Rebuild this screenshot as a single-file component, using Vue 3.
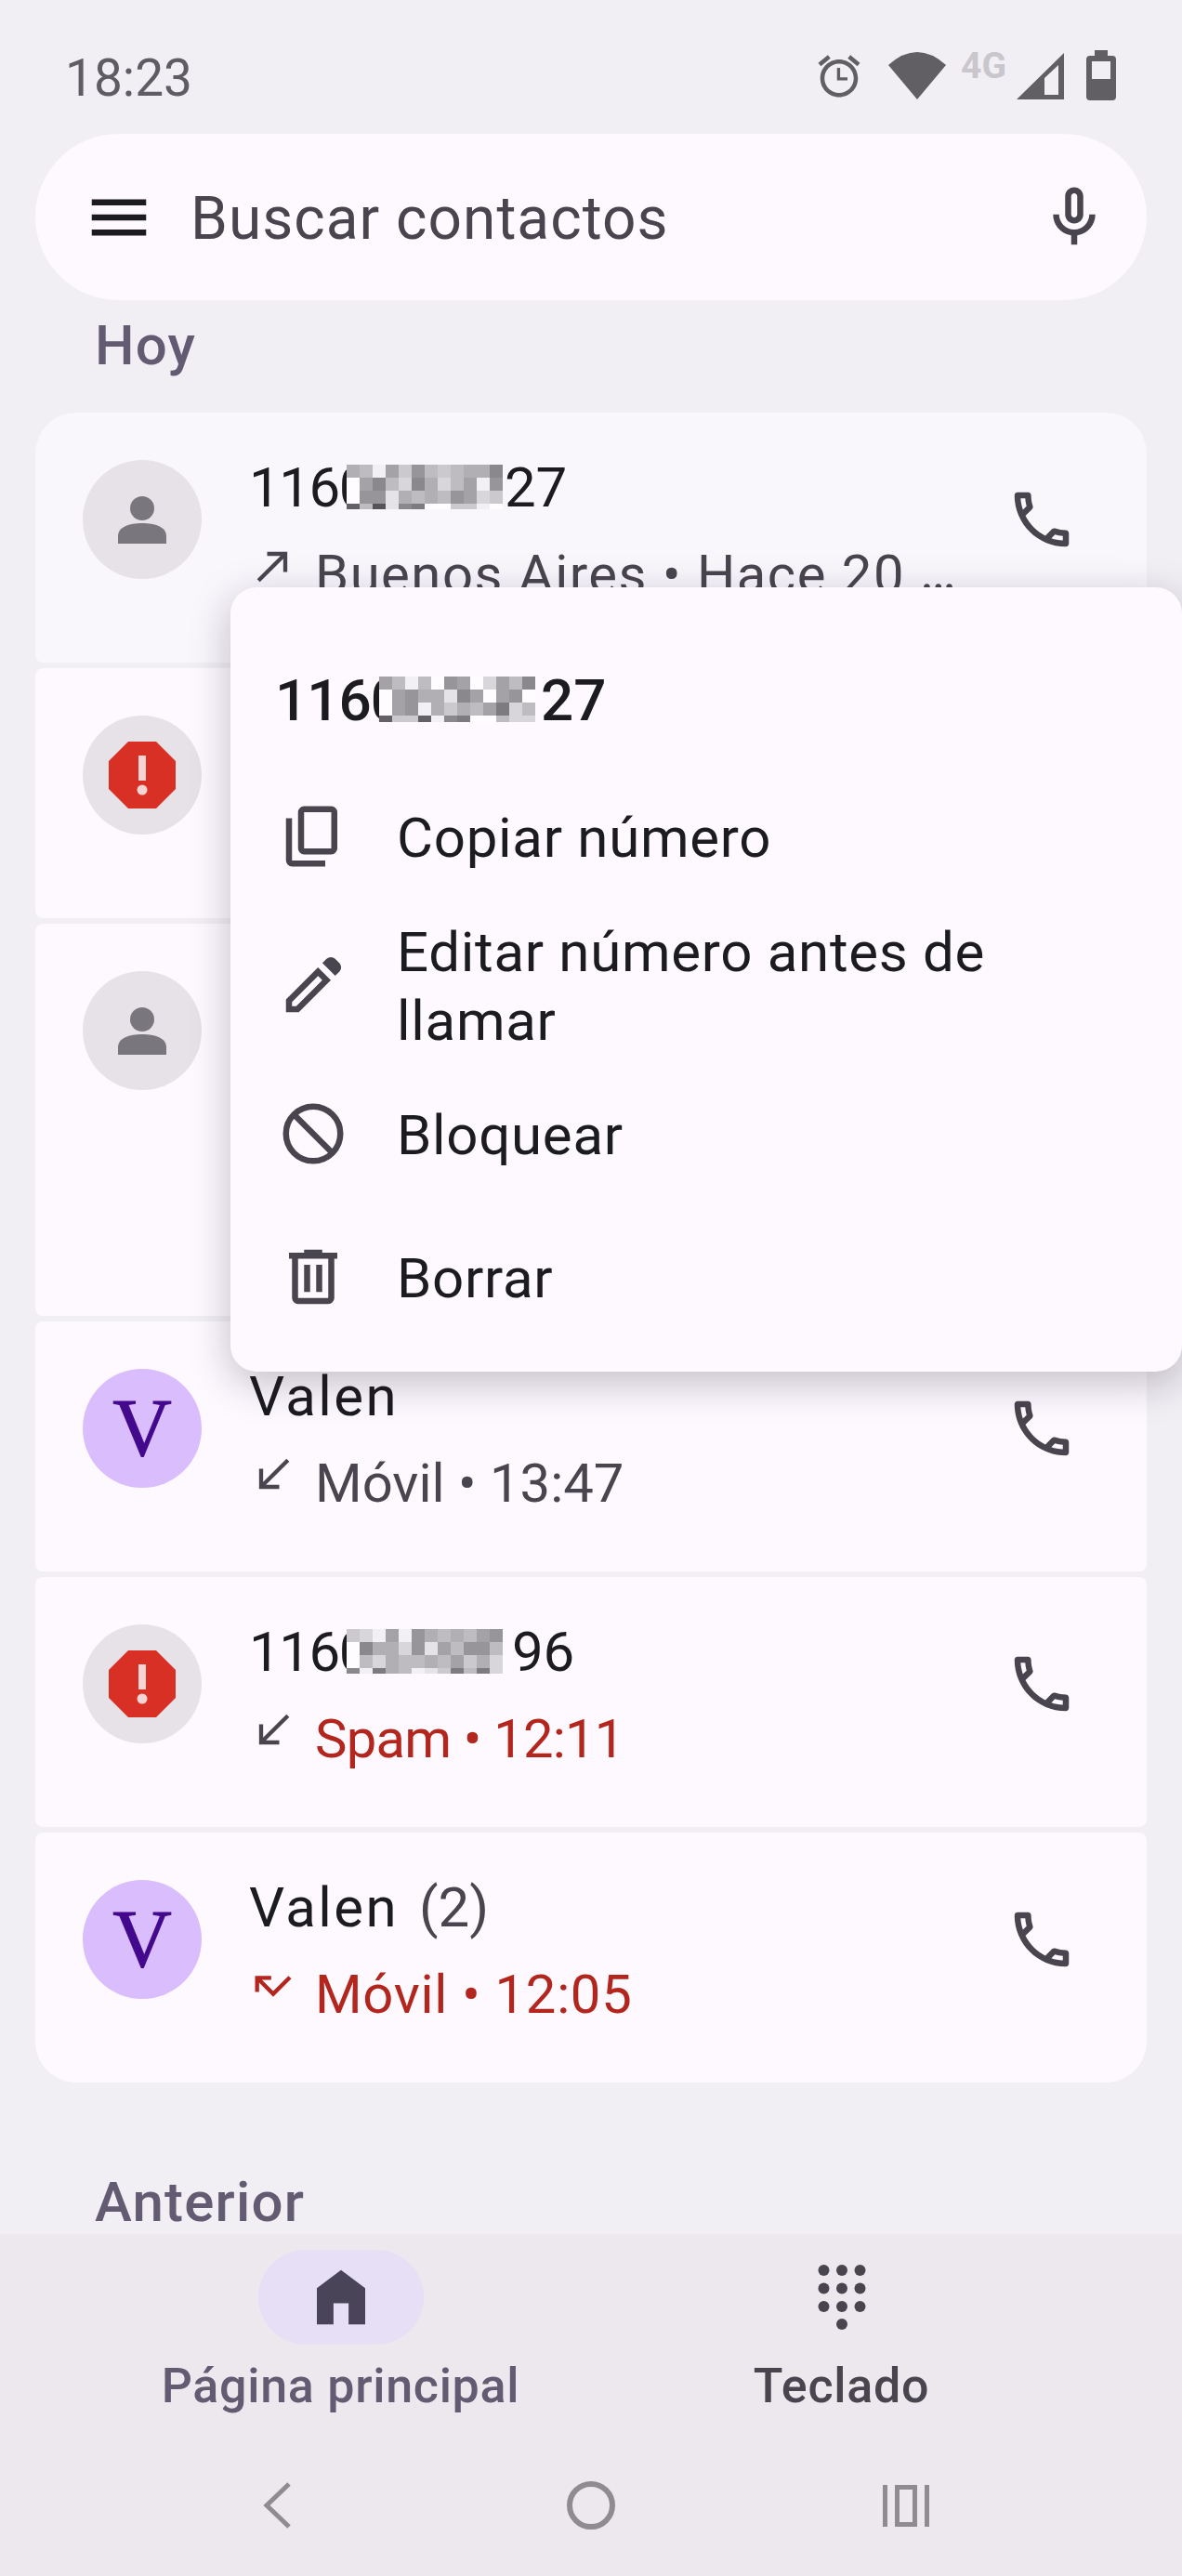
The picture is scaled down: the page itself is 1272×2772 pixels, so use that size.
<template>
  <div class="phone">
    <header class="status">
      <span class="clock">18:23</span>
      <div class="status-icons">
        <svg class="st-alarm" width="54" height="54" viewBox="0 0 24 24"><path :d="icons.alarm" /></svg>
        <svg class="st-wifi" width="62" height="51" viewBox="0 0 62 51"><path d="M31 51 0 14Q31-14 62 14Z" /></svg>
        <span class="st-4g">4G</span>
        <svg class="st-signal" width="51" height="50" viewBox="0 0 51 50"><path fill-rule="evenodd" d="M0 50 51 0V50ZM30 27V45H45V13Z" /></svg>
        <div class="st-battery"><i></i></div>
      </div>
    </header>

    <div class="search">
      <svg class="ic" viewBox="0 0 24 24"><path fill="#1c1b1f" :d="icons.menu" /></svg>
      <span class="search-text">Buscar contactos</span>
      <svg class="ic" viewBox="0 0 24 24"><path fill="#49454f" :d="icons.mic" /></svg>
    </div>

    <main class="list">
      <h2 class="section first">Hoy</h2>
      <section class="cards">
        <article v-for="c in calls" :key="c.id" class="card" :class="{ tall: c.tall }">
          <div class="avatar" :class="c.kind">
            <template v-if="c.kind === 'person'">
              <svg width="64" height="64" viewBox="0 0 64 64"><circle cx="32" cy="20" r="13" fill="#79767d" /><path fill="#79767d" d="M6 58V50C6 40 18 36 32 36S58 40 58 50V58Z" /></svg>
            </template>
            <template v-else-if="c.kind === 'spam'">
              <svg width="72" height="72" viewBox="0 0 72 72"><path fill="#d93025" d="M21 0H51L72 21V51L51 72H21L0 51V21Z" /><rect x="32" y="15" width="8" height="27" fill="#f4d5d3" /><circle cx="36" cy="52" r="5.500" fill="#f4d5d3" /></svg>
            </template>
            <span v-else class="letter">V</span>
          </div>
          <div v-if="c.name" class="info">
            <div class="name" :class="{ spaced: !c.mosaic }">
              <template v-if="c.mosaic">
                <span class="tight">{{ c.name }}</span>
                <span class="mosaic" :style="{ marginRight: c.pad + 'px' }">
                  <i v-for="(g, i) in cells(c.mosaic)" :key="i" :style="{ background: g }"></i>
                </span>
                <span>{{ c.end }}</span>
              </template>
              <template v-else>{{ c.name }}<span v-if="c.count" class="count">{{ c.count }}</span></template>
            </div>
            <div class="detail" :class="{ red: c.red }">
              <svg class="arrow" viewBox="0 0 24 24"><path :fill="c.dir === 'missed' ? '#b3261e' : '#49454f'" :d="icons[c.dir]" /></svg>
              <span :style="{ letterSpacing: c.ls + 'px' }">{{ c.text }}<span v-if="c.cut" class="dots">…</span></span>
            </div>
          </div>
          <svg v-if="c.name" class="ic phone-ic" viewBox="0 0 24 24"><path fill="#49454f" :d="icons.call" /></svg>
        </article>
      </section>
      <h2 class="section last">Anterior</h2>
    </main>

    <nav class="tabs">
      <div class="tab active">
        <div class="pill">
          <svg class="ic" viewBox="0 0 24 24"><path fill="#4a4458" d="M4 21V9l8-6 8 6v12h-5.500v-7h-5v7Z" /></svg>
        </div>
        <span>Página principal</span>
      </div>
      <div class="tab">
        <div class="pill">
          <svg width="78" height="78" viewBox="0 0 78 78">
            <circle v-for="d in dots" :key="d[0] + '-' + d[1]" :cx="d[0]" :cy="d[1]" r="6" fill="#49454f" />
          </svg>
        </div>
        <span>Teclado</span>
      </div>
    </nav>

    <footer class="sysbar">
      <svg width="60" height="60" viewBox="0 0 60 60"><path d="M44 7 20 30 44 53" fill="none" stroke="#8e8c90" stroke-width="5" /></svg>
      <svg width="60" height="60" viewBox="0 0 60 60"><circle cx="30" cy="30" r="23" fill="none" stroke="#8e8c90" stroke-width="6" /></svg>
      <svg width="60" height="60" viewBox="0 0 60 60"><path d="M5 8h5v45H5ZM50 8h5v45h-5ZM18 8h24v45H18Zm5 5v35h14V13Z" fill="#8e8c90" fill-rule="evenodd" /></svg>
    </footer>

    <div class="popup">
      <div class="popup-title">
        <span class="tight-s">1160</span>
        <span class="mosaic popup-mosaic">
          <i v-for="(g, i) in cells(popupMosaic)" :key="i" :style="{ background: g }"></i>
        </span>
        <span>27</span>
      </div>
      <div v-for="m in menu" :key="m.label" class="menu-row" :class="{ wrap: m.wrap }">
        <svg v-if="m.icon !== 'block'" class="ic" viewBox="0 0 24 24"><path fill="#49454f" :d="icons[m.icon]" /></svg>
        <svg v-else class="ic" viewBox="0 0 24 24"><circle cx="12" cy="12" r="9" fill="none" stroke="#49454f" stroke-width="2" /><path d="M5.700 5.700 18.300 18.300" stroke="#49454f" stroke-width="2" /></svg>
        <span>{{ m.label }}</span>
      </div>
    </div>
  </div>
</template>

<script setup>
const icons = {
  alarm: 'M22 5.72l-4.6-3.86-1.29 1.53 4.6 3.86L22 5.72zM7.88 3.39L6.6 1.86 2 5.71l1.29 1.53 4.59-3.85zM12.5 8H11v6h5v-1.500h-3.500zM12 4c-4.97 0-9 4.03-9 9s4.03 9 9 9 9-4.03 9-9-4.03-9-9-9zm0 16c-3.87 0-7-3.13-7-7s3.13-7 7-7 7 3.13 7 7-3.13 7-7 7z',
  menu: 'M3 18h18v-2H3v2zm0-5h18v-2H3v2zm0-5h18V6H3v2z',
  mic: 'M12 14c1.66 0 3-1.34 3-3V5c0-1.66-1.34-3-3-3S9 3.34 9 5v6c0 1.66 1.34 3 3 3zm-1-9c0-.55.45-1 1-1s1 .45 1 1v6c0 .55-.45 1-1 1s-1-.45-1-1V5zm6 6c0 2.76-2.24 5-5 5s-5-2.24-5-5H5c0 3.53 2.61 6.43 6 6.92V21h2v-3.08c3.39-.49 6-3.39 6-6.92h-2z',
  call: 'M6.54 5c.06.89.21 1.76.45 2.59l-1.2 1.2c-.41-1.2-.67-2.47-.76-3.79h1.51m9.86 12.02c.85.24 1.72.39 2.6.45v1.49c-1.32-.09-2.59-.35-3.8-.75l1.2-1.19M7.5 3H4c-.55 0-1 .45-1 1 0 9.39 7.61 17 17 17 .55 0 1-.45 1-1v-3.49c0-.55-.45-1-1-1-1.24 0-2.45-.2-3.57-.57-.1-.04-.21-.05-.31-.05-.26 0-.51.1-.71.29l-2.2 2.2c-2.83-1.45-5.15-3.76-6.59-6.59l2.2-2.2c.28-.28.36-.67.25-1.02C8.7 6.45 8.5 5.25 8.5 4c0-.55-.45-1-1-1z',
  made: 'M9 5v2h6.59L4 18.59 5.41 20 17 8.41V15h2V5z',
  received: 'M20 5.41 18.59 4 7 15.59V9H5v10h10v-2H8.410z',
  missed: 'M19.590 7 12 14.590 6.410 9H11V7H3v8h2v-4.590l7 7 9-9z',
  copy: 'M9 18q-.825 0-1.413-.587Q7 16.825 7 16V4q0-.825.587-1.413Q8.175 2 9 2h9q.825 0 1.413.587Q20 3.175 20 4v12q0 .825-.587 1.413Q18.825 18 18 18Zm0-2h9V4H9v12Zm-4 6q-.825 0-1.413-.587Q3 20.825 3 20V6h2v14h11v2Z',
  edit: 'M5 19h1.400l8.625-8.625-1.400-1.400L5 17.600ZM19.300 8.925l-4.250-4.200 1.400-1.400q.575-.575 1.413-.575.837 0 1.412.575l1.400 1.400q.575.575.6 1.388.025.812-.55 1.387ZM17.850 10.400 7.250 21H3v-4.250l10.600-10.600Z',
  trash: 'M7 21q-.825 0-1.412-.587Q5 19.825 5 19V6H4V4h5V3h6v1h5v2h-1v13q0 .825-.587 1.413Q17.825 21 17 21ZM17 6H7v13h10ZM9 17h2V8H9Zm4 0h2V8h-2Z',
}

// 4 rows of one hex digit per cell, 0 = dark, f = near white
const popupMosaic = [
  '8aeaf78fc8a6',
  'f8799d68f87f8',
  'f87e9b9a85ca',
  '3bb3e65ffacc',
]

const calls = [
  {
    id: 1, kind: 'person', name: '1160', pad: 2, end: '27', dir: 'made',
    text: 'Buenos Aires • Hace 20 ', cut: true, ls: 1.5,
    mosaic: ['9ae8b7aba996', 'f86ac69ca8e7', 'f77d9a9a78cb', '3a2d65ffbbe'],
  },
  { id: 2, kind: 'spam' },
  { id: 3, kind: 'person', tall: true },
  { id: 4, kind: 'contact', name: 'Valen', dir: 'received', text: 'Móvil • 13:47', ls: 0 },
  {
    id: 5, kind: 'spam', name: '1160', pad: 10, end: '96', dir: 'received', red: true,
    text: 'Spam • 12:11', ls: -0.8,
    mosaic: ['bce8e79a9a87', 'f699c7d8a77a', 'fac9aa9a8b9c', '6e59aedb5a5c'],
  },
  { id: 6, kind: 'contact', name: 'Valen', count: '(2)', dir: 'missed', red: true, text: 'Móvil • 12:05', ls: 0.7 },
]

const menu = [
  { label: 'Copiar número', icon: 'copy' },
  { label: 'Editar número antes de llamar', icon: 'edit', wrap: true },
  { label: 'Bloquear', icon: 'block' },
  { label: 'Borrar', icon: 'trash' },
]

const dots = []
for (const y of [10, 29.5, 49]) {
  for (const x of [19.5, 39, 58.5]) dots.push([x, y])
}
dots.push([39, 68])

function cells(rows) {
  const out = []
  for (const row of rows) {
    for (let i = 0; i < 12; i++) {
      const v = parseInt(row[i] || 'f', 16)
      const g = 60 + Math.round(v * 13)
      out.push(`rgb(${g},${g - 3},${g + 3})`)
    }
  }
  return out
}
</script>

<style>
html, body { margin: 0; background: #f1eef4; }
</style>

<style scoped>
.phone {
  position: relative;
  width: 1272px;
  height: 2772px;
  overflow: hidden;
  display: flex;
  flex-direction: column;
  background: #f1eef4;
  font-family: Roboto, "Noto Sans", sans-serif;
  color: #1c1b1f;
}
.ic { width: 78px; height: 78px; flex: none; display: block; }

.status {
  height: 144px;
  box-sizing: border-box;
  padding: 54px 71px 0 70px;
  display: flex;
  justify-content: space-between;
  align-items: flex-start;
}
.clock { font-size: 55px; line-height: 60px; color: #5f5d63; }
.status-icons { display: flex; align-items: flex-start; }
.status-icons svg { fill: #615f63; display: block; }
.st-alarm { margin-top: 1px; }
.st-wifi { margin: 2px 0 0 26px; }
.st-4g { margin: -14px 0 0 16px; font-size: 39px; line-height: 62px; height: 40px; font-weight: 700; color: #c9c6cc; }
.st-signal { margin: 3px 0 0 11px; }
.st-battery {
  position: relative;
  margin: 6px 0 0 24px;
  width: 32px;
  height: 48px;
  border-radius: 4px;
  background: #615f63;
}
.st-battery::before {
  content: "";
  position: absolute;
  left: 9px;
  top: -6px;
  width: 14px;
  height: 6px;
  background: #615f63;
}
.st-battery i {
  position: absolute;
  left: 6px;
  top: 6px;
  width: 20px;
  height: 19px;
  background: #f1eef4;
}

.search {
  height: 179px;
  margin: 0 38px;
  padding: 0 39px 0 51px;
  display: flex;
  align-items: center;
  border-radius: 90px;
  background: #fdf9ff;
}
.search-text { flex: 1; margin: 3px 0 0 38px; font-size: 64px; color: #49454f; letter-spacing: 1px; }

.list { flex: 1; min-height: 0; overflow: hidden; }
.section { margin: 0; font-size: 60px; line-height: 68px; font-weight: 500; color: #625b71; padding-left: 102px; letter-spacing: 1.2px; }
.section.first { margin-top: 15px; margin-bottom: 38px; }
.section.last { margin-top: 95px; }

.cards { margin: 0 38px; display: flex; flex-direction: column; gap: 6px; }
.card {
  position: relative;
  height: 269px;
  box-sizing: border-box;
  padding: 45px 74px 0 51px;
  display: flex;
  align-items: flex-start;
  border-radius: 8px;
  background: #fdf9ff;
}
.card:first-child { border-radius: 44px 44px 8px 8px; background: #f9f6fc; }
.card:last-child { border-radius: 8px 8px 44px 44px; }
.card.tall { height: 422px; }

.avatar {
  flex: none;
  width: 128px;
  height: 128px;
  margin-top: 6px;
  border-radius: 50%;
  display: flex;
  align-items: center;
  justify-content: center;
  background: #e6e2e8;
}
.avatar.contact { background: #d9bdfd; }
.letter { font-family: "Liberation Serif", serif; font-size: 88px; line-height: 88px; color: #42098c; -webkit-text-stroke: 1px #42098c; }

.info { flex: 1; margin-left: 51px; min-width: 0; }
.name { display: flex; height: 72px; font-size: 60px; line-height: 72px; white-space: pre; }
.name.spaced { letter-spacing: 2.4px; }
.tight { letter-spacing: -1.5px; }
.tight-s { letter-spacing: -1px; }
.count { margin-left: 22px; color: #49454f; letter-spacing: 0; }
.mosaic {
  display: grid;
  grid-template-columns: repeat(12, 14px);
  grid-template-rows: 14px 14px 14px 6px;
  align-self: flex-start;
  margin: 11px 0 0 -24px;
}
.mosaic i { display: block; }
.popup-mosaic { margin: 10px 6px 0 -25px; grid-template-rows: 14px 14px 14px 7px; }

.detail { display: flex; align-items: flex-start; height: 72px; margin-top: 21px; font-size: 58px; line-height: 72px; color: #49454f; white-space: pre; }
.detail.red { color: #b3261e; }
.arrow { width: 52px; height: 52px; flex: none; margin: 1px 19px 0 0; }
.dots { position: relative; top: -4px; }
.phone-ic { margin-top: 31px; }

.tabs {
  height: 230px;
  box-sizing: border-box;
  padding: 17px 97px 0;
  display: flex;
  background: #ece8ee;
}
.tab {
  flex: 1;
  display: flex;
  flex-direction: column;
  align-items: center;
  font-size: 52px;
  line-height: 60px;
  font-weight: 500;
  letter-spacing: .7px;
  color: #49454f;
}
.tab.active { color: #625b71; }
.pill {
  width: 178px;
  height: 102px;
  margin-bottom: 15px;
  border-radius: 51px;
  display: flex;
  align-items: center;
  justify-content: center;
}
.tab.active .pill { background: #e6dff6; }

.sysbar {
  height: 138px;
  box-sizing: border-box;
  padding: 32px 127px 0;
  display: grid;
  grid-template-columns: repeat(3, 1fr);
  justify-items: center;
  align-items: start;
  background: #ece8ee;
}

.popup {
  position: absolute;
  left: 248px;
  right: 0;
  top: 632px;
  height: 844px;
  box-sizing: border-box;
  border-radius: 28px;
  background: #fdf9ff;
  box-shadow: 0 12px 44px rgba(30, 20, 40, .26);
}
.popup-title {
  display: flex;
  height: 191px;
  box-sizing: border-box;
  padding: 86px 0 0 48px;
  font-size: 62px;
  line-height: 72px;
  font-weight: 500;
}
.menu-row {
  height: 154px;
  display: flex;
  align-items: center;
  padding-left: 50px;
  padding-right: 48px;
  font-size: 60px;
  line-height: 74px;
  letter-spacing: .7px;
}
.menu-row.wrap { height: 166px; }
.menu-row span { margin: 3px 0 0 51px; }
</style>
